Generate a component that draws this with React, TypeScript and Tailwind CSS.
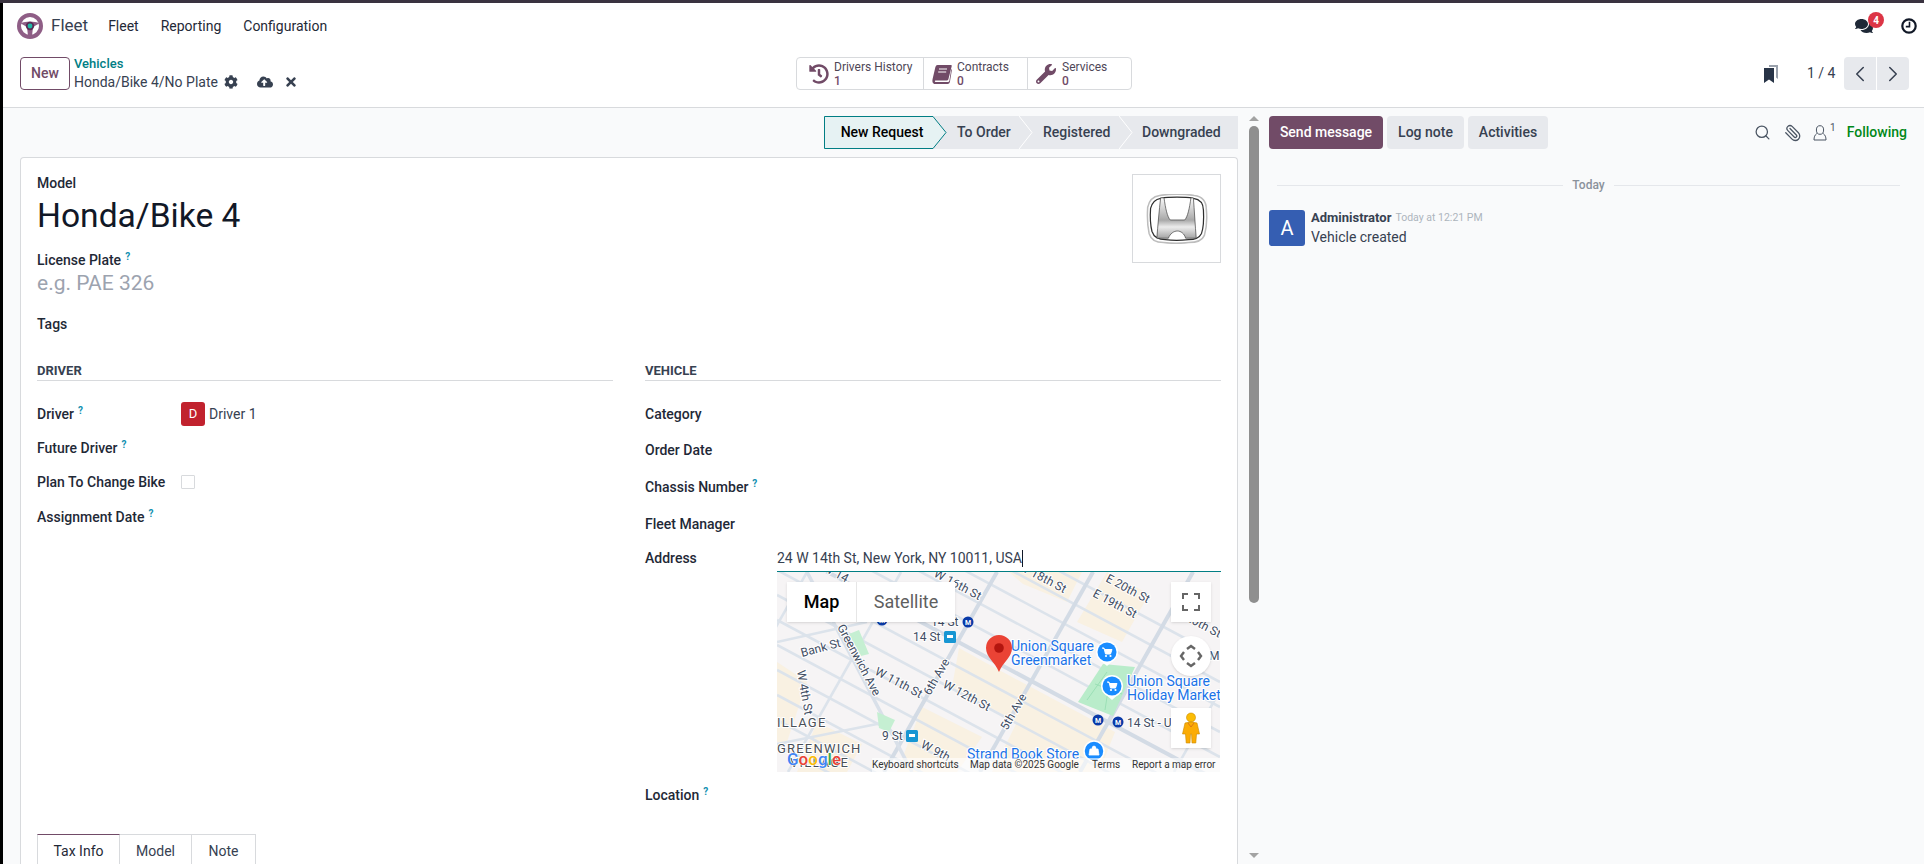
import React from 'react';
import { FaCloudUploadAlt, FaCog, FaComments, FaHistory, FaTimes, FaWrench } from 'react-icons/fa';
import { ChevronLeft, ChevronRight, Paperclip, Search } from 'lucide-react';

const crossStreets = [-152, -127, -102, -77, -52, -27, -2, 23, 48, 73, 98, 123, 148, 173];
const avenues = [30, 124, 220, 316, 416, 510];

const mapLabels = [
  { x: 136, y: 69, text: '14 St' },
  { x: 154, y: 54, text: '14 St' },
  { x: 105, y: 168, text: '9 St' },
  { x: 350, y: 155, text: '14 St - U' },
  { x: 25, y: 85, text: 'Bank St', rot: -15 },
  { x: 60, y: 55, text: 'Greenwich Ave', rot: 62 },
  { x: 20, y: 99, text: 'W 4th St', rot: 80 },
  { x: 97, y: 102, text: 'W 11th St', rot: 28 },
  { x: 165, y: 115, text: 'W 12th St', rot: 28 },
  { x: 153, y: 124, text: '6th Ave', rot: -60 },
  { x: 230, y: 159, text: '5th Ave', rot: -60 },
  { x: 328, y: 9, text: 'E 20th St', rot: 28 },
  { x: 315, y: 24, text: 'E 19th St', rot: 28 },
  { x: 241, y: -3, text: 'W 18th St', rot: 28 },
  { x: 156, y: 4, text: 'W 16th St', rot: 28 },
  { x: 143, y: 175, text: 'W 9th', rot: 28 },
  { x: 45, y: -2, text: 'W 14', rot: 28 },
  { x: 408, y: 48, text: '20th St', rot: 28 },
  { x: 432, y: 88, text: 'M' },
];

const metroStops = [
  { x: 191, y: 50 },
  { x: 321, y: 148 },
  { x: 341, y: 150 },
  { x: 105, y: 48 },
];

const FieldLabel = ({ text, help }: { text: string; help?: boolean }) => (
  <span className="font-medium text-[#1f2937] whitespace-nowrap">
    {text}
    {help && <sup className="ml-1 text-[10px] font-bold text-[#0f8fb0]">?</sup>}
  </span>
);

const BookIcon = () => (
  <svg viewBox="0 0 20 20" className="w-[20px] h-[20px]" fill="#714b67">
    <path d="M5.5 1 H19 Q20 1 19.7 2.2 L16.4 15.2 Q16 16.6 14.6 16.6 H3.6 Q2.6 16.6 2.9 17.4 Q3.2 18 4 18 H16 Q17 18 17.3 17 L19.3 5 Q20 5.4 19.8 6.4 L17.9 18 Q17.5 20 15.6 20 H3.4 Q0.6 20 0.4 17.2 Q0.3 16 0.7 14.4 L3.4 3 Q3.9 1 5.5 1 Z" />
    <path d="M7 5 H15 M6.2 8 H14.2" stroke="#fff" strokeWidth="1" />
  </svg>
);

const StatButton = ({ icon, label, value, width, pad, gap }: { icon: React.ReactNode; label: string; value: string; width: string; pad: string; gap: string }) => (
  <div className={`flex items-center border-r border-[#d8dadd] last:border-r-0 ${width} ${pad} ${gap}`}>
    <span className="w-[20px] text-[20px] text-[#714b67] flex justify-center">{icon}</span>
    <div className="flex flex-col text-[12px] leading-[14px] text-[#4f4757]">
      <span>{label}</span>
      <span className="font-medium text-[#714b67]">{value}</span>
    </div>
  </div>
);

const HondaLogo = () => (
  <svg viewBox="0 0 64 52" className="w-[62px] h-[50px]">
    <defs>
      <linearGradient id="chrome" x1="0" y1="0" x2="0" y2="1">
        <stop offset="0" stopColor="#fbfbfb" />
        <stop offset="0.55" stopColor="#a8a8a8" />
        <stop offset="0.72" stopColor="#ececec" />
        <stop offset="1" stopColor="#a4a4a4" />
      </linearGradient>
    </defs>
    <path d="M14 1.5 C24 0 40 0 50 1.5 C58 2.5 62.5 7 62.5 16 C63.5 26 62.5 36 60.5 43 C58 49 52 50.5 44 50.5 C36 51.5 26 51.5 18 50.5 C10 50.5 5 48 3 41 C1 32 1 22 1.5 14 C3 6 7 2.5 14 1.5 Z" fill="#fff" stroke="#bdbdbd" strokeWidth="1.6" />
    <path d="M15 4.5 C24 3 40 3 49 4.5 C56 5.5 59.5 10 59.5 17 C60 26 59.5 35 57.5 41 C55 46 50 47.5 44 47.5 C36 48.5 27 48.5 20 47.5 C13 47.5 8 45 6 39 C4 31 4 22 4.5 15 C6 9 9 5.5 15 4.5 Z" fill="#fff" stroke="#2e2e2e" strokeWidth="1.3" />
    <path d="M15 4 H18.5 C20 15 22 24 25 27 H40 C43 24 45 15 46.5 4 H49 C50 16 51 34 52 46 H41 C38 36 27 36 23 46 H11 C12 34 13.5 16 15 4 Z" fill="url(#chrome)" stroke="#3c3c3c" strokeWidth="0.7" />
  </svg>
);

const CartPin = ({ x, y }: { x: number; y: number }) => (
  <g>
    <path d={`M${x - 10} ${y + 5} L${x} ${y + 14} L${x + 10} ${y + 5} Z`} fill="#fff" />
    <circle cx={x} cy={y} r="11" fill="#fff" />
    <circle cx={x} cy={y} r="9.5" fill="#1a8cff" />
    <path d={`M${x - 5} ${y - 4} h2 l1.5 6 h5 l1.5 -4.5 h-7.5`} fill="#fff" stroke="#fff" strokeWidth="1" />
    <circle cx={x - 1} cy={y + 4} r="1.1" fill="#fff" />
    <circle cx={x + 3.5} cy={y + 4} r="1.1" fill="#fff" />
  </g>
);

const MapDrawing = () => (
  <svg viewBox="0 0 443 200" className="block w-[443px] h-[200px]">
    <rect width="443" height="200" fill="#f6f4f5" />
    <g fill="#f9f1e2">
      <polygon points="182,76 222,98 338,160 322,200 215,200 240,150 175,115" />
      <polygon points="145,135 205,165 180,200 120,200" />
      <polygon points="232,0 305,0 290,30 246,12" />
      <polygon points="300,50 330,0 372,22 345,70" />
      <polygon points="0,90 30,110 10,170 0,170" />
      <polygon points="40,150 85,172 70,200 20,200" />
    </g>
    <g stroke="#dce3eb" strokeWidth="2.6">
      {crossStreets.map((c) => (
        <line key={c} x1="0" y1={c} x2="443" y2={c + 237} />
      ))}
      {avenues.map((x) => (
        <line key={x} x1={x} y1="0" x2={x - 113} y2="200" />
      ))}
    </g>
    <g stroke="#d3dbe5" strokeWidth="4">
      <line x1="0" y1="-27" x2="443" y2="210" />
      <line x1="220" y1="0" x2="107" y2="200" />
      <line x1="316" y1="0" x2="203" y2="200" />
      <line x1="416" y1="0" x2="303" y2="200" />
    </g>
    <line x1="30" y1="0" x2="135" y2="200" stroke="#d9e0e9" strokeWidth="3.5" />
    <line x1="0" y1="70" x2="90" y2="50" stroke="#dce3eb" strokeWidth="2.6" />
    <line x1="0" y1="172" x2="110" y2="150" stroke="#dce3eb" strokeWidth="2.6" />
    <polygon points="326,92 358,95 336,144 301,130" fill="#b9ecca" />
    <path d="M310 128 L330 100 M318 112 L345 122 M328 138 L332 112" stroke="#93dcb0" strokeWidth="0.8" fill="none" />
    <polygon points="72,62 82,58 92,82 84,84" fill="#c5efd2" />
    <polygon points="100,140 118,148 112,160 102,156" fill="#c5efd2" />

    <g fontFamily="Roboto, sans-serif" fontSize="12" fill="#3f4d63" stroke="#ffffff" strokeWidth="2" paintOrder="stroke">
      {mapLabels.map((l) => (
        <text key={l.text + l.x} x={l.x} y={l.y} transform={l.rot ? `rotate(${l.rot} ${l.x} ${l.y})` : undefined}>
          {l.text}
        </text>
      ))}
    </g>
    <g fontFamily="Roboto, sans-serif" fontSize="13" fill="#4a4f57" stroke="#ffffff" strokeWidth="2" paintOrder="stroke" letterSpacing="1.2">
      <text x="0" y="155">ILLAGE</text>
      <text x="0" y="181">GREENWICH</text>
      <text x="13" y="195">VILLAGE</text>
    </g>
    <g fontFamily="Roboto, sans-serif" fontSize="14" fill="#1a73e8" stroke="#ffffff" strokeWidth="2" paintOrder="stroke">
      <text x="234" y="79">Union Square</text>
      <text x="234" y="93">Greenmarket</text>
      <text x="350" y="114">Union Square</text>
      <text x="350" y="128">Holiday Market</text>
      <text x="190" y="187">Strand Book Store</text>
    </g>
    <CartPin x={330} y={80} />
    <CartPin x={335} y={114} />
    <g>
      <circle cx="317" cy="179" r="10" fill="#1a8cff" stroke="#fff" strokeWidth="1.5" />
      <path d="M312 183 h10 l-1 -6 h-8 Z M315 177 a2 3 0 0 1 4 0" fill="#fff" stroke="#fff" strokeWidth="0.8" />
    </g>
    {metroStops.map((m) => (
      <g key={m.x}>
        <circle cx={m.x} cy={m.y} r="5.5" fill="#0a3aa8" />
        <text x={m.x} y={m.y + 2.5} textAnchor="middle" fontFamily="Roboto, sans-serif" fontSize="7" fontWeight="700" fill="#fff">M</text>
      </g>
    ))}
    <g fill="#1796d3">
      <rect x="167" y="59" width="12" height="12" rx="1.5" />
      <rect x="129" y="158" width="12" height="12" rx="1.5" />
    </g>
    <g fill="#fff">
      <rect x="170" y="63" width="6" height="3" />
      <rect x="132" y="162" width="6" height="3" />
    </g>
    <path d="M222 100 C218 90 209 85 209 76 A13 13 0 0 1 235 76 C235 85 226 90 222 100 Z" fill="#ea4335" />
    <circle cx="222" cy="76" r="4.8" fill="#b3150f" />
    <text x="10" y="193" fontFamily="Roboto, sans-serif" fontSize="17" fontWeight="500" stroke="#ffffff" strokeWidth="1" paintOrder="stroke">
      <tspan fill="#4285f4">G</tspan>
      <tspan fill="#ea4335">o</tspan>
      <tspan fill="#fbbc05">o</tspan>
      <tspan fill="#4285f4">g</tspan>
      <tspan fill="#34a853">l</tspan>
      <tspan fill="#ea4335">e</tspan>
    </text>
  </svg>
);

const MapPanel = () => (
  <div className="relative w-[443px] h-[200px] overflow-hidden">
    <MapDrawing />
    <div className="absolute left-[10px] top-[10px] h-[40px] flex bg-white text-[18px] shadow-sm">
      <div className="w-[70px] flex items-center justify-center font-medium text-black border-r border-[#e6e6e6]">Map</div>
      <div className="w-[98px] flex items-center justify-center text-[#5f5f5f]">Satellite</div>
    </div>
    <div className="absolute left-[394px] top-[10px] w-[40px] h-[40px] bg-white flex items-center justify-center shadow-sm">
      <svg viewBox="0 0 18 18" className="w-[18px] h-[18px]" fill="none" stroke="#666" strokeWidth="2">
        <path d="M1 6V1h5M12 1h5v5M17 12v5h-5M6 17H1v-5" />
      </svg>
    </div>
    <div className="absolute left-[394px] top-[64px] w-[40px] h-[40px] rounded-full bg-white flex items-center justify-center shadow-sm">
      <svg viewBox="0 0 24 24" className="w-[24px] h-[24px]" fill="none" stroke="#666" strokeWidth="2.4">
        <path d="M8 5l4-3 4 3M8 19l4 3 4-3M5 8l-3 4 3 4M19 8l3 4-3 4" />
      </svg>
    </div>
    <div className="absolute left-[394px] top-[136px] w-[40px] h-[40px] bg-white flex items-center justify-center shadow-sm">
      <svg viewBox="0 0 20 32" className="w-[20px] h-[32px]">
        <circle cx="10" cy="5.5" r="4.5" fill="#fbbc05" stroke="#c98a00" strokeWidth="0.6" />
        <path d="M4 11 Q10 9 16 11 L18.5 22 L15.5 22 L14.8 31 L11 31 L10.5 22 L9.5 22 L9 31 L5.2 31 L4.5 22 L1.5 22 Z" fill="#fbac05" stroke="#c98a00" strokeWidth="0.6" />
        <path d="M7 11 L10 15 L13 11" fill="none" stroke="#d9731a" strokeWidth="0.9" />
      </svg>
    </div>
    <div className="absolute right-0 bottom-0 w-[348px] h-[14px] bg-white/60 text-[10px] leading-[14px] text-[#333] flex whitespace-nowrap">
      <span className="w-[98px]">Keyboard shortcuts</span>
      <span className="w-[122px]">Map data ©2025 Google</span>
      <span className="w-[40px]">Terms</span>
      <span>Report a map error</span>
    </div>
  </div>
);

const Divider = ({ title }: { title: string }) => (
  <div className="h-[19px] border-b border-[#d8dadd] text-[13px] font-bold text-[#374151] flex items-center">{title}</div>
);

export default function App() {
  return (
    <div className="w-[1924px] h-[864px] overflow-hidden flex flex-col bg-white text-[14px] text-[#374151] font-[Roboto,sans-serif]">
      <div className="h-[3px] bg-[#3a3340]" />
      <div className="flex flex-1 min-h-0">
        <div className="w-[3px] bg-black" />
        <div className="flex-1 flex flex-col min-w-0">
          {/* navbar */}
          <div className="h-[43px] pt-[3px] flex items-center justify-between">
            <div className="flex items-center">
              <svg viewBox="0 0 26 26" className="ml-[14px] w-[26px] h-[26px]">
                <circle cx="13" cy="13" r="11" fill="none" stroke="#8f5e86" strokeWidth="4" />
                <path d="M3 10 Q13 7 23 10 L16 14 L15 23 H11 L10 14 Z" fill="#8f5e86" />
                <circle cx="13" cy="13" r="4.2" fill="#5b2c55" />
                <circle cx="13" cy="13" r="2.4" fill="#21b8a6" />
              </svg>
              <span className="ml-[8px] text-[17px] text-[#374151]">Fleet</span>
              <span className="ml-[20px] text-[#1f2937]">Fleet</span>
              <span className="ml-[22px] text-[#1f2937]">Reporting</span>
              <span className="ml-[22px] text-[#1f2937]">Configuration</span>
            </div>
            <div className="flex items-center pr-[7px]">
              <div className="relative">
                <FaComments className="text-[18px] text-[#1f2937]" />
                <span className="absolute left-[13px] top-[-5px] w-[16px] h-[16px] rounded-full bg-[#dc3545] text-white text-[10px] font-bold flex items-center justify-center">4</span>
              </div>
              <svg viewBox="0 0 16 16" className="ml-[28px] w-[16px] h-[16px]" fill="none" stroke="#111827">
                <circle cx="8" cy="8" r="6.7" strokeWidth="2.2" />
                <path d="M8.5 3.8V8.6H4.8" strokeWidth="1.6" />
              </svg>
            </div>
          </div>

          {/* control panel */}
          <div className="h-[62px] border-b border-[#d8dadd] flex items-start pt-[11px] relative">
            <div className="ml-[17px] w-[50px] h-[33px] rounded-[4px] border border-[#714b67] text-[#714b67] font-medium flex items-center justify-center">New</div>
            <div className="ml-[4px] w-[722px] flex flex-col">
              <span className="text-[13px] leading-[16px] mt-[-1px] font-medium text-[#017e84]">Vehicles</span>
              <div className="flex items-center h-[20px]">
                <span>Honda/Bike 4/No Plate</span>
                <FaCog className="ml-[6px] text-[14px] text-[#374151]" />
                <FaCloudUploadAlt className="ml-[19px] text-[16px] text-[#374151]" />
                <FaTimes className="ml-[11px] text-[14px] text-[#374151]" />
              </div>
            </div>
            <div className="h-[33px] w-[336px] border border-[#d8dadd] rounded-[4px] flex">
              <StatButton icon={<FaHistory />} label="Drivers History" value="1" width="w-[127px]" pad="pl-[12px]" gap="gap-[5px]" />
              <StatButton icon={<BookIcon />} label="Contracts" value="0" width="w-[104px]" pad="pl-[8px]" gap="gap-[5px]" />
              <StatButton icon={<FaWrench />} label="Services" value="0" width="w-[103px]" pad="pl-[8px]" gap="gap-[6px]" />
            </div>
            <div className="flex-1 flex items-center justify-end h-[33px] pr-[15px]">
              <svg viewBox="0 0 14 18" className="w-[14px] h-[18px]">
                <path d="M5 0h9v14l-2-1.5V2H5Z" fill="#9aa1ac" />
                <path d="M0 3h10v15l-5-3.5L0 18Z" fill="#283447" />
              </svg>
              <span className="ml-[29px] w-[37px] text-[#374151]">1 / 4</span>
              <div className="w-[32px] h-[33px] bg-[#e7e9ed] rounded-l-[4px] flex items-center justify-center mr-px">
                <ChevronLeft className="w-[26px] h-[26px] text-[#374151]" strokeWidth={1.4} />
              </div>
              <div className="w-[32px] h-[33px] bg-[#e7e9ed] rounded-r-[4px] flex items-center justify-center">
                <ChevronRight className="w-[26px] h-[26px] text-[#374151]" strokeWidth={1.4} />
              </div>
            </div>
          </div>

          <div className="flex-1 flex min-h-0">
            {/* form */}
            <div className="w-[1245px] bg-[#f9fafb] flex flex-col min-h-0">
              <div className="mt-[8px] mr-[10px] h-[33px] flex justify-end">
                <div className="flex h-full bg-[#e7e9ed] font-medium">
                  <div className="relative w-[123px] h-full">
                    <svg viewBox="0 0 123 33" className="absolute inset-0 w-[123px] h-[33px]">
                      <path d="M0.5 0.5 H109 L122 16.5 L109 32.5 H0.5 Z" fill="#e6f2f3" stroke="#017e84" />
                    </svg>
                    <span className="absolute inset-0 pr-[7px] flex items-center justify-center text-black font-medium">New Request</span>
                  </div>
                  <div className="w-[72px] pl-[10px] flex items-center">To Order</div>
                  <div className="relative w-[100px] pl-[24px] flex items-center">
                    <svg viewBox="0 0 14 33" className="absolute left-0 top-0 w-[14px] h-[33px]"><path d="M0 0 L13 16.5 L0 33" fill="none" stroke="#fff" /></svg>
                    Registered
                  </div>
                  <div className="relative w-[119px] pl-[23px] flex items-center">
                    <svg viewBox="0 0 14 33" className="absolute left-0 top-0 w-[14px] h-[33px]"><path d="M0 0 L13 16.5 L0 33" fill="none" stroke="#fff" /></svg>
                    Downgraded
                  </div>
                </div>
              </div>

              <div className="mt-[8px] ml-[17px] mr-[10px] flex-1 min-h-0 bg-white border border-b-0 border-[#d8dadd] rounded-t-[4px] pl-[16px] pr-[16px] pt-[16px] overflow-hidden">
                <div className="flex justify-between items-start">
                  <div className="flex flex-col">
                    <div className="h-[18px] flex items-center"><FieldLabel text="Model" /></div>
                    <div className="mt-[3px] h-[42px] flex items-center text-[33.6px] text-[#111827]">Honda/Bike 4</div>
                    <div className="mt-[13px] h-[20px] flex items-center"><FieldLabel text="License Plate" help /></div>
                    <div className="h-[28px] flex items-center text-[21px] text-[#9ca3af]">e.g. PAE 326</div>
                    <div className="mt-[16px] h-[20px] flex items-center"><FieldLabel text="Tags" /></div>
                  </div>
                  <div className="w-[89px] h-[89px] border border-[#d8dadd] flex items-center justify-center">
                    <HondaLogo />
                  </div>
                </div>

                <div className="mt-[28px] flex gap-[32px] h-[472px]">
                  <div className="w-[576px]">
                    <Divider title="DRIVER" />
                    <div className="pt-[16px]">
                      <div className="h-[34px] flex items-center">
                        <div className="w-[144px]"><FieldLabel text="Driver" help /></div>
                        <span className="w-[24px] h-[24px] rounded-[3px] bg-[#c1222e] text-white text-[13px] flex items-center justify-center">D</span>
                        <span className="ml-[4px]">Driver 1</span>
                      </div>
                      <div className="h-[34px] flex items-center"><FieldLabel text="Future Driver" help /></div>
                      <div className="h-[34px] flex items-center">
                        <div className="w-[144px]"><FieldLabel text="Plan To Change Bike" /></div>
                        <span className="w-[14px] h-[14px] border border-[#d8dadd] rounded-[1px]" />
                      </div>
                      <div className="mt-[1px] h-[34px] flex items-center"><FieldLabel text="Assignment Date" help /></div>
                    </div>
                  </div>
                  <div className="w-[576px]">
                    <Divider title="VEHICLE" />
                    <div className="pt-[15px]">
                      <div className="h-[36.5px] flex items-center"><FieldLabel text="Category" /></div>
                      <div className="h-[36.5px] flex items-center"><FieldLabel text="Order Date" /></div>
                      <div className="h-[36.5px] flex items-center"><FieldLabel text="Chassis Number" help /></div>
                      <div className="h-[37px] flex items-center"><FieldLabel text="Fleet Manager" /></div>
                      <div className="flex mt-[4px]">
                        <div className="w-[132px] pt-[1px]"><FieldLabel text="Address" /></div>
                        <div className="w-[444px]">
                          <div className="h-[25px] border-b border-[#017e84] flex items-center">
                            <span>24 W 14th St, New York, NY 10011, USA</span>
                            <span className="w-px h-[17px] bg-[#111827]" />
                          </div>
                          <MapPanel />
                        </div>
                      </div>
                      <div className="mt-[15px] h-[18px] flex items-center"><FieldLabel text="Location" help /></div>
                    </div>
                  </div>
                </div>

                <div className="flex h-[40px]">
                  <div className="w-[83px] border border-b-0 border-[#d8dadd] border-t-[#714b67] flex items-center justify-center pb-[6px] text-[#1f2937]">Tax Info</div>
                  <div className="w-[72px] border-t border-r border-[#d8dadd] flex items-center justify-center pb-[6px]">Model</div>
                  <div className="w-[64px] border-t border-r border-[#d8dadd] flex items-center justify-center pb-[6px]">Note</div>
                </div>
              </div>
            </div>

            {/* scrollbar */}
            <div className="w-[12px] bg-[#f9fafb] flex flex-col items-center pt-[8px]">
              <div className="w-0 h-0 border-x-[5px] border-x-transparent border-b-[5px] border-b-[#a3a3a3]" />
              <div className="mt-[5px] w-[10px] h-[477px] rounded-full bg-[#8f8f8f]" />
              <div className="mt-auto mb-[6px] w-0 h-0 border-x-[5px] border-x-transparent border-t-[5px] border-t-[#a3a3a3]" />
            </div>

            {/* chatter */}
            <div className="flex-1 bg-[#f9fafb] pl-[9px] pr-[17px] pt-[8px]">
              <div className="flex items-center h-[33px]">
                <div className="w-[114px] h-full rounded-[4px] bg-[#714b67] text-white font-medium flex items-center justify-center">Send message</div>
                <div className="ml-[4px] w-[77px] h-full rounded-[4px] bg-[#e7e9ed] text-[#374151] font-medium flex items-center justify-center">Log note</div>
                <div className="ml-[4px] w-[80px] h-full rounded-[4px] bg-[#e7e9ed] text-[#374151] font-medium flex items-center justify-center">Activities</div>
                <div className="ml-auto flex items-center">
                  <Search className="w-[17px] h-[17px] text-[#4b5563]" strokeWidth={1.8} />
                  <Paperclip className="ml-[13px] w-[18px] h-[18px] text-[#4b5563] -scale-x-100" strokeWidth={1.7} />
                  <svg viewBox="0 0 14 16" className="ml-[11px] w-[14px] h-[16px]" fill="none" stroke="#4b5563" strokeWidth="1">
                    <ellipse cx="7" cy="5" rx="3.6" ry="4.3" />
                    <path d="M3.8 8.5 C1.8 10 1 12 1 15 H13 C13 12 12.2 10 10.2 8.5" />
                  </svg>
                  <sup className="ml-[3px] text-[10px] text-[#4b5563]">1</sup>
                  <span className="ml-[11px] font-medium text-[#008818]">Following</span>
                </div>
              </div>
              <div className="mt-[28px] h-[16px] flex items-center ml-[8px] mr-[7px]">
                <div className="flex-1 h-px bg-[#e5e7eb]" />
                <span className="mx-[9px] text-[12px] font-medium text-[#8b929c]">Today</span>
                <div className="flex-1 h-px bg-[#e5e7eb]" />
              </div>
              <div className="mt-[17px] flex">
                <div className="w-[36px] h-[36px] rounded-[3px] bg-[#355eb2] text-white text-[20px] flex items-center justify-center">A</div>
                <div className="ml-[6px] flex flex-col">
                  <div className="h-[16px] flex items-center gap-[4px]">
                    <span className="text-[13px] font-bold text-[#374151]">Administrator</span>
                    <span className="text-[10.5px] text-[#adb5bd]">Today at 12:21 PM</span>
                  </div>
                  <span className="mt-[1px] leading-[20px]">Vehicle created</span>
                </div>
              </div>
            </div>
          </div>
        </div>
      </div>
    </div>
  );
}
